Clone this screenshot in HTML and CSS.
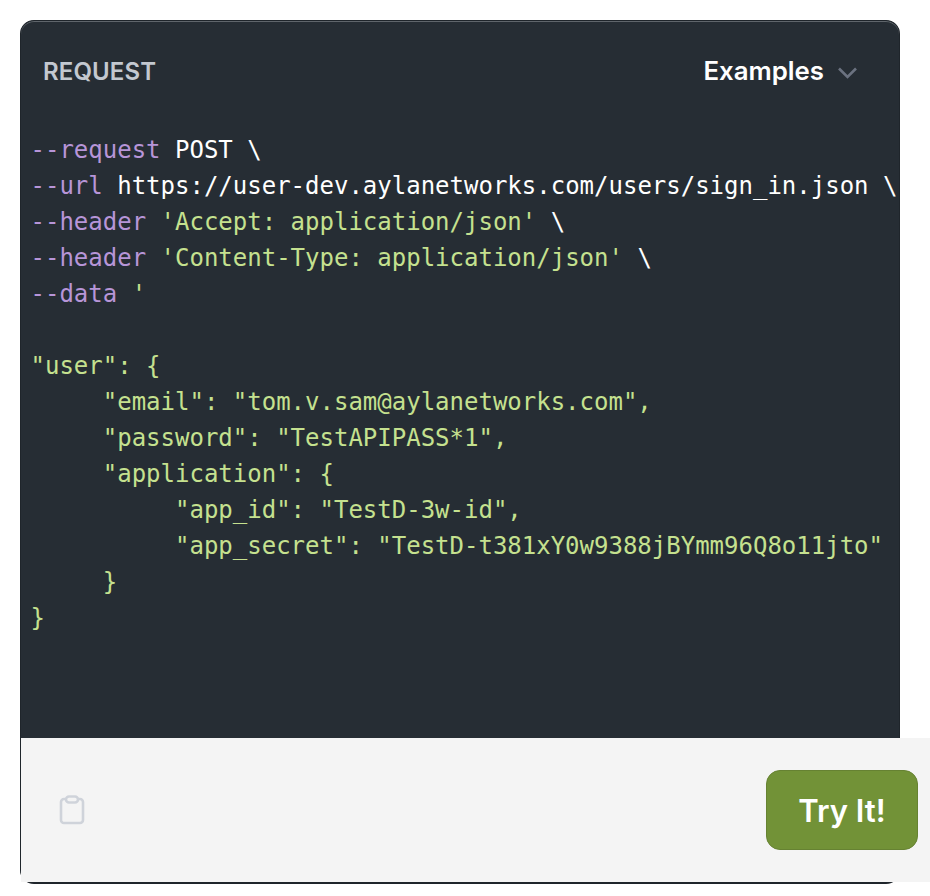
FILE: index.html
```html
<!DOCTYPE html>
<html lang="en">
<head>
<meta charset="utf-8">
<title>Request</title>
<link rel="stylesheet" href="styles.css">
</head>
<body>
<section class="card">
  <header class="card-head">
    <span class="label">REQUEST</span>
    <button class="examples" type="button">
      <span class="examples-text">Examples</span>
      <svg class="chev" width="19" height="12" viewBox="0 0 19 12" fill="none"><path d="M1 1.5l8.5 8.5L18 1.5" stroke="#6b7280" stroke-width="2.6"/></svg>
    </button>
  </header>
  <pre class="code"><span class="k">--request</span> <span class="w">POST \</span>
<span class="k">--url</span> <span class="w">https://user-dev.aylanetworks.com/users/sign_in.json \</span>
<span class="k">--header</span> <span class="s">'Accept: application/json'</span> <span class="w">\</span>
<span class="k">--header</span> <span class="s">'Content-Type: application/json'</span> <span class="w">\</span>
<span class="k">--data</span> <span class="s">'</span>

<span class="s">"user": {</span>
<span class="s">     "email": "tom.v.sam@aylanetworks.com",</span>
<span class="s">     "password": "TestAPIPASS*1",</span>
<span class="s">     "application": {</span>
<span class="s">          "app_id": "TestD-3w-id",</span>
<span class="s">          "app_secret": "TestD-t381xY0w9388jBYmm96Q8o11jto"</span>
<span class="s">     }</span>
<span class="s">}</span></pre>
  <footer class="card-foot">
    <svg class="clip" width="26" height="30" viewBox="0 0 26 30" fill="none" stroke="#cfd3da" stroke-width="2.6"><rect x="2" y="4" width="22" height="24" rx="3"/><rect x="7" y="1.5" width="12" height="6" rx="3" fill="#f4f4f4"/></svg>
    <button class="try" type="button">Try It!</button>
  </footer>
</section>
</body>
</html>
```
FILE: styles.css
```css
html, body { margin: 0; padding: 0; background: #fff; }
body { padding: 20px 30px 12px 20px; width: 880px; height: 864px; overflow: hidden; }
.card {
  box-sizing: border-box;
  width: 880px;
  height: 864px;
  background: #262d34;
  border: 1px solid #1f252b;
  border-bottom-width: 2px;
  border-radius: 14px;
  box-shadow: inset 0 1px 0 #5f656b;
  display: flex;
  flex-direction: column;
}
.card-head {
  display: flex;
  justify-content: space-between;
  align-items: center;
  height: 100px;
  padding: 0 42px 0 22px;
  font-family: Inter, sans-serif;
  font-weight: 600;
  font-size: 24px;
}
.label { color: #c3c8d0; letter-spacing: 0.1px; }
.examples {
  display: flex;
  align-items: center;
  gap: 14px;
  background: none;
  border: 0;
  padding: 0;
  color: #fff;
  font: inherit;
  font-size: 25.8px;
}
.examples-text { margin-top: -2px; }
.chev { margin-top: 3px; }
.code {
  flex: 1;
  margin: 0;
  padding: 11px 0 0 9.5px;
  font-family: "DejaVu Sans Mono", monospace;
  font-size: 24px;
  line-height: 36px;
  white-space: pre;
}
.k { color: #b795d8; }
.w { color: #fff; }
.s { color: #c5e18f; }
.card-foot {
  width: 909px;
  height: 144px;
  box-sizing: border-box;
  background: #f4f4f4;
  display: flex;
  align-items: center;
  justify-content: space-between;
  padding: 0 12px 0 38px;
}
.clip { display: block; }
.try {
  width: 152px;
  height: 80px;
  background: #729237;
  border: 1px solid #668232;
  border-radius: 14px;
  color: #fff;
  font-family: Inter, sans-serif;
  font-weight: 600;
  font-size: 31px;
  padding: 0;
}
```
